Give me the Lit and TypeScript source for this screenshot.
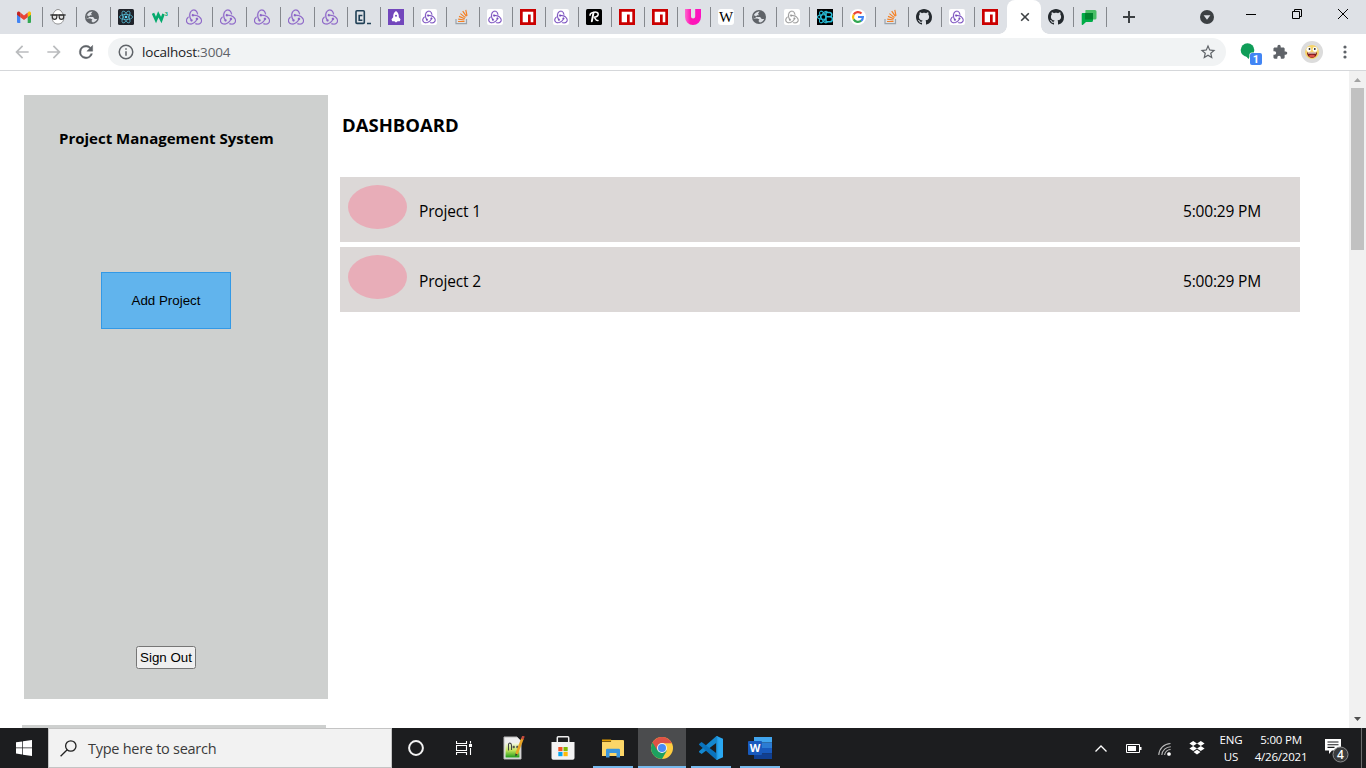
import { LitElement, html, css, svg } from "lit";
import { customElement, property } from "lit/decorators.js";
import { classMap } from "lit/directives/class-map.js";

const REDUX =
  "M16.634 16.504c.87-.075 1.543-.84 1.5-1.754-.047-.914-.796-1.648-1.709-1.648h-.061a1.71 1.71 0 00-1.648 1.769c.03.479.226.869.494 1.153-1.048 2.038-2.621 3.535-5.005 4.795-1.603.838-3.296 1.154-4.944.929-1.378-.194-2.456-.81-3.116-1.799-.988-1.499-1.078-3.116-.255-4.734.601-1.166 1.499-2.023 2.099-2.443a9.96 9.96 0 01-.42-1.543C-.868 14.408-.416 18.752.932 20.805c1.004 1.498 3.057 2.456 5.304 2.456.6 0 1.23-.044 1.843-.194 3.897-.749 6.848-3.086 8.541-6.532zm5.348-3.746c-2.32-2.728-5.738-4.226-9.634-4.226h-.51c-.253-.554-.837-.899-1.498-.899h-.045c-.943 0-1.678.81-1.647 1.753.03.898.794 1.648 1.708 1.648h.074a1.69 1.69 0 001.499-1.049h.555c2.309 0 4.495.674 6.488 1.992 1.527 1.005 2.622 2.323 3.237 3.896.538 1.288.509 2.547-.045 3.597-.855 1.647-2.294 2.517-4.196 2.517-1.199 0-2.367-.375-2.967-.644-.359.298-.959.793-1.394 1.093 1.318.598 2.652.943 3.94.943 2.922 0 5.093-1.647 5.918-3.236.898-1.798.824-4.824-1.47-7.416zM6.49 17.042c.03.899.793 1.648 1.708 1.648h.06a1.688 1.688 0 001.648-1.768c0-.9-.779-1.647-1.693-1.647h-.06c-.06 0-.149 0-.226.029-1.243-2.098-1.768-4.347-1.572-6.772.12-1.828.72-3.417 1.797-4.735.899-1.124 2.593-1.68 3.746-1.708 3.236-.061 4.585 3.971 4.689 5.574l1.498.45c-.345-4.914-3.4-7.492-6.322-7.492-2.742 0-5.273 1.993-6.293 4.915-1.398 3.896-.479 7.641 1.229 10.638-.149.195-.239.54-.209.868z";
const GITHUB =
  "M8 0C3.58 0 0 3.58 0 8c0 3.54 2.29 6.53 5.47 7.59.4.07.55-.17.55-.38 0-.19-.01-.82-.01-1.49-2.01.37-2.53-.49-2.69-.94-.09-.23-.48-.94-.82-1.13-.28-.15-.68-.52-.01-.53.63-.01 1.08.58 1.23.82.72 1.21 1.87.87 2.33.66.07-.52.28-.87.51-1.07-1.78-.2-3.64-.89-3.64-3.95 0-.87.31-1.59.82-2.15-.08-.2-.36-1.02.08-2.12 0 0 .67-.21 2.2.82.64-.18 1.32-.27 2-.27s1.36.09 2 .27c1.53-1.04 2.2-.82 2.2-.82.44 1.1.16 1.92.08 2.12.51.56.82 1.27.82 2.15 0 3.07-1.87 3.75-3.65 3.95.29.25.54.73.54 1.48 0 1.07-.01 1.93-.01 2.2 0 .21.15.46.55.38A8.01 8.01 0 0 0 16 8c0-4.42-3.58-8-8-8z";

const orbits = (color: string, w: number) => svg`
  <g fill="none" stroke=${color} stroke-width=${w}>
    <ellipse cx="8" cy="8" rx="6.6" ry="2.6"/>
    <ellipse cx="8" cy="8" rx="6.6" ry="2.6" transform="rotate(60 8 8)"/>
    <ellipse cx="8" cy="8" rx="6.6" ry="2.6" transform="rotate(120 8 8)"/>
  </g>`;

const redux = (color: string) => svg`<path transform="scale(.6667)" fill=${color} stroke=${color} stroke-width=".3" d=${REDUX}/>`;
const reduxTile = (color: string) => svg`
  <rect width="16" height="16" rx="2" fill="#fff"/>
  <path transform="translate(1.4 1.4) scale(.55)" fill=${color} stroke=${color} stroke-width=".4" d=${REDUX}/>`;

const FAVICONS: Record<string, unknown> = {
  gmail: svg`
    <path fill="#4285f4" d="M1 4v9a1 1 0 0 0 1 1h2.300V6z"/>
    <path fill="#34a853" d="M11.700 14H14a1 1 0 0 0 1-1V4l-3.300 2z"/>
    <path fill="#fbbc04" d="M11.700 4v4.200L15 5.700V4.300c0-1.500-1.600-2.200-2.700-1.400z"/>
    <path fill="#ea4335" d="M4.300 8.200V3.600L8 6.400l3.700-2.800v4.600L8 11z"/>
    <path fill="#c5221f" d="M1 4.300v1.400l3.300 2.500V3.500l-.6-.6C2.600 2.100 1 2.800 1 4.300z"/>`,
  egg: svg`
    <path d="M8 .5c3 0 5.800 4.700 5.800 8.500 0 3.500-2.500 6-5.800 6s-5.800-2.500-5.800-6C2.200 5.200 5 .5 8 .5z" fill="#fff" stroke="#777" stroke-width=".8"/>
    <g fill="#e4e4e4" stroke="#333" stroke-width="1.200">
      <path d="M2.300 6h4.500v2c0 3.200-4.500 3.200-4.500 0zM9.200 6h4.500v2c0 3.200-4.500 3.200-4.500 0z"/>
      <path d="M.3 6h15.400" fill="none" stroke-width="1.300"/>
    </g>`,
  globe: svg`
    <circle cx="8" cy="8" r="7" fill="#5f6368"/>
    <path fill="#dee1e6" d="M8.600 2.600 7 4.700l1 1.600H6L4.800 8l4.300.1 1.600 1.900h2.500c-.7 1.900-2.400 3.200-4.400 3.500L7.400 12l1-1.600-2-.9H2.700C1.800 6 4.700 2.600 8.600 2.600z"/>
    <path fill="#5f6368" d="M2.500 6 5 7.300 4.500 9H2.400z"/>`,
  react: svg`<rect width="16" height="16" rx="1.500" fill="#20232a"/>${orbits("#55bcd6", 0.75)}<circle cx="8" cy="8" r="1.300" fill="#61dafb"/>`,
  w3: svg`
    <path fill="none" stroke="#04aa6d" stroke-width="2.600" d="M1 4.200 4 11l2.300-5.600L9.300 11l2.200-6"/>
    <text class="bold" x="12.800" y="6.500" font-size="5.500" fill="#04aa6d">3</text>`,
  redux: redux("#8b63c8"),
  reduxTile: reduxTile("#764abc"),
  reduxGrey: reduxTile("#999"),
  code: svg`
    <rect x="1" y="1.700" width="8.300" height="12.700" rx="1" fill="none" stroke="#204056" stroke-width="1.600"/>
    <path d="M7.400 6.500H4.200v4.700h3.200M12 14.500h4" fill="none" stroke="#204056" stroke-width="1.600"/>`,
  rocket: svg`
    <rect width="16" height="16" fill="#7347bc"/>
    <path fill="#fff" d="M8 2c2.300 1.500 3 4 2.800 6.300l1.700 1.900-.7 2H9.600L8 13.600l-1.600-1.400H4.200l-.7-2 1.700-1.900C5 6 5.700 3.500 8 2z"/>
    <circle cx="8" cy="6.700" r="1" fill="#7347bc"/>`,
  stack: svg`
    <path d="M2 10v4.600h10.500V10" fill="none" stroke="#9ba4ac" stroke-width="1.200"/>
    <path d="M4 12.500h6.500M4.200 10.200l6.200.8M5 7.400l5.800 2.300M6.400 4.600l5 4M8.700 2.200l3.700 5.200M11.800.8l1.200 6" fill="none" stroke="#f48024" stroke-width="1.200"/>`,
  npm: svg`
    <rect width="16" height="16" fill="#cb0000"/>
    <path fill="#fff" d="M2.700 2.700h10.600v10.600h-2.600V5.400H8v7.900H2.700z"/>`,
  script: svg`
    <rect width="16" height="16" rx="1.500" fill="#000"/>
    <g fill="none" stroke="#fff" stroke-linecap="round">
      <path stroke-width="1.900" d="M7.500 3.800 5.800 12.200"/>
      <path stroke-width="1.500" d="M4 6.200c0-3.400 8.600-4.400 8.200-.9-.2 1.700-2 2.700-4.500 2.900 2 .3 1.600 4.200 4.300 3.300"/>
    </g>`,
  magenta: svg`
    <defs><linearGradient id="mg" x1="0" x2="1"><stop offset="0" stop-color="#ff6ad0"/><stop offset=".35" stop-color="#ff17b4"/><stop offset="1" stop-color="#fb12c2"/></linearGradient></defs>
    <path fill="url(#mg)" d="M0 0h6v7.500a2 2 0 0 0 4.200 0V0H16v8a8 8 0 0 1-16 0z"/>`,
  wiki: svg`
    <rect width="16" height="16" rx="3" fill="#fff"/>
    <text class="serif" x="8" y="13" text-anchor="middle" font-size="15" fill="#000">W</text>`,
  bootstrap: svg`
    <rect width="16" height="16" fill="#000"/>
    <g fill="none" stroke="#29bdd8" stroke-width="1.100">
      <ellipse cx="6.500" cy="8" rx="6" ry="2.300"/>
      <ellipse cx="6.500" cy="8" rx="6.500" ry="2.500" transform="rotate(60 6.500 8)"/>
      <ellipse cx="6.500" cy="8" rx="6.500" ry="2.500" transform="rotate(120 6.500 8)"/>
    </g>
    <path d="M9 3.500h3.600c3 0 2.800 4.300 0 4.300H9zm0 4.300h4c3.300 0 3.200 5 0 5H9z" fill="#000" stroke="#29bdd8" stroke-width="1.500"/>`,
  google: svg`
    <circle cx="8" cy="8" r="8" fill="#fff"/>
    <g fill="none" stroke-width="2.200">
      <path stroke="#ea4335" d="M3.700 5.600A4.900 4.900 0 0 1 11.500 4.500"/>
      <path stroke="#fbbc05" d="M3.700 5.600A4.900 4.900 0 0 0 3.700 10.500"/>
      <path stroke="#34a853" d="M3.700 10.400A4.900 4.900 0 0 0 11.200 11.700"/>
      <path stroke="#4285f4" d="M11.100 11.800A4.900 4.900 0 0 0 12.900 8H8"/>
    </g>`,
  github: svg`<path fill="#24292e" d=${GITHUB}/>`,
  chat: svg`
    <path fill="#49be66" d="M4.500 1H14a1.500 1.500 0 0 1 1.500 1.500V9A1.500 1.500 0 0 1 14 10.500H4z"/>
    <path fill="#00ac47" d="M1.500 4H12v7.500a1.500 1.500 0 0 1-1.500 1.500H5l-3 2.700c-.8.500-1.300.3-1.300-.5V5c0-.6.300-1 .8-1z"/>
    <path fill="#00832d" d="M4 4h8v6.500H4z"/>`,
};

const TABS = [
  "gmail", "egg", "globe", "react", "w3", "redux", "redux", "redux", "redux",
  "redux", "code", "rocket", "reduxTile", "stack", "reduxTile", "npm", "reduxTile",
  "script", "npm", "npm", "magenta", "wiki", "globe", "reduxGrey", "bootstrap",
  "google", "stack", "github", "reduxTile", "npm",
];

@customElement("browser-tab")
class BrowserTab extends LitElement {
  @property() icon = "";
  @property({ type: Boolean }) wide = false;
  @property({ type: Boolean }) last = false;

  static styles = css`
    :host { display: block; flex: none; height: 34px; }
    .tab { display: flex; align-items: center; height: 34px; width: 33px; padding-left: 7px; box-sizing: border-box; justify-content: space-between; }
    .wide { width: 34px; }
    .last { width: 32px; }
    svg { display: block; width: 16px; height: 16px; }
    .line { width: 1px; height: 20px; background: #85888d; }
    .bold { font-family: "Liberation Sans", sans-serif; font-weight: 700; }
    .serif { font-family: "Liberation Serif", serif; }
  `;

  render() {
    return html`<div class=${classMap({ tab: true, wide: this.wide, last: this.last })}>
      <svg viewBox="0 0 16 16">${FAVICONS[this.icon]}</svg>
      ${this.last ? "" : html`<span class="line"></span>`}
    </div>`;
  }
}

@customElement("browser-chrome")
class BrowserChrome extends LitElement {
  static styles = css`
    :host { display: block; font-family: "Open Sans", sans-serif; }
    svg { display: block; flex: none; }
    .strip { display: flex; height: 34px; background: #dee1e6; padding-left: 9px; }
    .active { width: 34px; height: 34px; background: #fff; border-radius: 8px 8px 0 0; display: flex; align-items: center; justify-content: center; position: relative; box-sizing: border-box; padding-left: 2px; }
    .active::before, .active::after { content: ""; position: absolute; bottom: 0; width: 8px; height: 8px; }
    .active::before { left: -8px; background: radial-gradient(circle at 0 0, transparent 7.5px, #fff 8px); }
    .active::after { right: -8px; background: radial-gradient(circle at 100% 0, transparent 7.5px, #fff 8px); }
    .plus { padding: 10px 0 0 15px; }
    .window { margin-left: auto; display: flex; }
    .down { padding: 10px 32px 0 0; }
    .min { padding: 14px 36px 0 0; }
    .restore { padding: 9px 36px 0 0; }
    .close { padding: 9px 18px 0 0; }
    .bar { display: flex; align-items: center; height: 36px; background: #fff; border-bottom: 1px solid #d5d7da; padding-left: 12px; }
    .nav { display: flex; gap: 12px; }
    .url { display: flex; align-items: center; width: 1118px; height: 28px; margin-left: 12px; border-radius: 14px; background: #f1f3f4; box-sizing: border-box; padding: 0 9px 0 9px; }
    .address { margin-left: 7px; flex: 1; font-size: 13.5px; letter-spacing: -0.2px; color: #202124; line-height: 20px; }
    .port { color: #5f6368; }
    .ext { display: flex; align-items: center; }
    .meet { margin: 5px 0 0 14px; }
    .puzzle { margin-left: 9px; }
    .avatar { margin-left: 12px; }
    .more { margin-left: 11.5px; }
    .num { font-family: "Roboto", sans-serif; font-weight: 700; }
  `;

  render() {
    return html`
      <div class="strip">
        ${TABS.map((t, i) => html`<browser-tab .icon=${t} .wide=${i < 9} .last=${i === TABS.length - 1}></browser-tab>`)}
        <div class="active">
          <svg width="10" height="10" viewBox="0 0 10 10"><path d="M1.200 1.200l7.600 7.600M8.800 1.200 1.200 8.800" stroke="#3c4043" stroke-width="1.600"/></svg>
        </div>
        <browser-tab .icon=${"github"}></browser-tab>
        <browser-tab .icon=${"chat"}></browser-tab>
        <div class="plus"><svg width="14" height="14" viewBox="0 0 14 14"><path d="M7 1v12M1 7h12" stroke="#3c4043" stroke-width="2"/></svg></div>
        <div class="window">
          <svg class="down" width="14" height="14" viewBox="0 0 14 14"><circle cx="7" cy="7" r="7" fill="#3c4043"/><path d="M3.600 5.200h6.800L7 9.800z" fill="#dee1e6"/></svg>
          <svg class="min" width="10" height="1"><rect width="10" height="1"/></svg>
          <svg class="restore" width="10" height="10" viewBox="0 0 10 10" fill="none" stroke="#000"><path d="M.5 2.500h7v7h-7zM2.500 2.500v-2h7v7h-2"/></svg>
          <svg class="close" width="10" height="10" viewBox="0 0 10 10"><path d="M0 0l10 10M10 0 0 10" stroke="#000"/></svg>
        </div>
      </div>
      <div class="bar">
        <div class="nav">
          <svg width="20" height="20" viewBox="0 0 24 24" fill="#babcbe"><path d="M20 11H7.830l5.590-5.590L12 4l-8 8 8 8 1.410-1.410L7.830 13H20z"/></svg>
          <svg width="20" height="20" viewBox="0 0 24 24" fill="#babcbe"><path d="M4 11h12.170l-5.590-5.590L12 4l8 8-8 8-1.410-1.410L16.170 13H4z"/></svg>
          <svg width="20" height="20" viewBox="0 0 24 24" fill="#5f6368" stroke="#5f6368" stroke-width=".5"><path d="M17.650 6.350A7.958 7.958 0 0 0 12 4a8 8 0 1 0 7.730 10h-2.080A6 6 0 1 1 12 6c1.660 0 3.140.69 4.220 1.780L13 11h7V4z"/></svg>
        </div>
        <div class="url">
          <svg width="18" height="18" viewBox="0 0 24 24" fill="#5f6368"><path d="M11 17h2v-6h-2v6zm1-15a10 10 0 1 0 0 20 10 10 0 0 0 0-20zm0 18a8 8 0 1 1 0-16 8 8 0 0 1 0 16zM11 9h2V7h-2z"/></svg>
          <span class="address">localhost<span class="port">:3004</span></span>
          <svg width="18" height="18" viewBox="0 0 24 24" fill="#5f6368"><path d="M22 9.240l-7.190-.62L12 2 9.190 8.630 2 9.240l5.460 4.730L5.820 21 12 17.270 18.180 21l-1.630-7.030zM12 15.400l-3.760 2.270 1-4.280-3.320-2.880 4.380-.38L12 6.100l1.710 4.040 4.380.38-3.320 2.880 1 4.280z"/></svg>
        </div>
        <div class="ext">
          <svg class="meet" width="22" height="23" viewBox="0 0 22 23">
            <circle cx="7.500" cy="7" r="6.800" fill="#0f9d58"/><path d="M5 12h6l-2.500 4z" fill="#0f9d58"/>
            <rect x="9.400" y="9.400" width="13.200" height="13.200" rx="2.500" fill="#fff"/>
            <rect x="10" y="10" width="12" height="12" rx="2" fill="#4285f4"/>
            <text class="num" x="16" y="20" font-size="11" text-anchor="middle" fill="#fff">1</text>
          </svg>
          <svg class="puzzle" width="18" height="18" viewBox="0 0 24 24" fill="#5f6368"><path d="M20.500 11H19V7c0-1.100-.9-2-2-2h-4V3.500a2.500 2.500 0 0 0-5 0V5H4c-1.100 0-2 .9-2 2v3.800h1.500a2.700 2.700 0 0 1 0 5.400H2V20c0 1.100.9 2 2 2h3.800v-1.500a2.700 2.700 0 0 1 5.400 0V22H17c1.100 0 2-.9 2-2v-4h1.500a2.500 2.500 0 0 0 0-5z" transform="translate(1.500 1.500) scale(.88)"/></svg>
          <svg class="avatar" width="22" height="22" viewBox="0 0 22 22">
            <circle cx="11" cy="11" r="11" fill="#dcdcdc"/><circle cx="11" cy="11" r="7" fill="#f7d56b"/>
            <circle cx="7.800" cy="8.500" r="2.400" fill="#fff"/><circle cx="14" cy="8.500" r="2.400" fill="#fff"/>
            <circle cx="8.500" cy="8" r=".9" fill="#222"/><circle cx="13.800" cy="8" r=".9" fill="#222"/>
            <path d="M6 11.500h10c0 7-10 7-10 0z" fill="#7d1c1c"/><path d="M7 11.500h8v1H7z" fill="#fff"/><ellipse cx="11" cy="15" rx="3" ry="1.300" fill="#e0504a"/>
          </svg>
          <svg class="more" width="20" height="20" viewBox="0 0 20 20" fill="#5f6368"><circle cx="10" cy="5" r="1.600"/><circle cx="10" cy="10" r="1.600"/><circle cx="10" cy="15" r="1.600"/></svg>
        </div>
      </div>`;
  }
}

@customElement("dashboard-page")
class DashboardPage extends LitElement {
  static styles = css`
    :host { display: flex; height: 657px; overflow: hidden; background: #fff; font-family: "Open Sans", sans-serif; color: #000; }
    .side { width: 328px; flex: none; }
    .panel { margin: 24px 0 0 24px; width: 304px; height: 604px; background: #ced0cf; display: flex; flex-direction: column; box-sizing: border-box; padding: 31px 0 30px 35px; }
    .next { margin: 26px 0 0 22px; width: 304px; height: 40px; background: #ced0cf; }
    .brand { margin: 0; font-size: 15px; line-height: 24px; font-weight: 700; letter-spacing: 0; white-space: nowrap; }
    button { font-family: "Liberation Sans", Arial, sans-serif; font-size: 13.333px; color: #000; padding: 0; box-sizing: border-box; }
    .add { margin: 122px 0 0 42px; width: 130px; height: 57px; background: #61b4ed; border: 1px solid #3399e6; }
    .out { margin: auto 0 0 77px; width: 60px; height: 23px; background: #efefef; border: 1px solid #767676; border-radius: 2.500px; }
    .main { flex: 1; padding: 40px 0 0 12px; }
    .title { margin: 0 0 39px 2px; font-size: 18.5px; line-height: 27px; font-weight: 700; letter-spacing: 0; }
    .list { display: flex; flex-direction: column; gap: 5px; }
    .row { width: 960px; height: 65px; box-sizing: border-box; padding: 8px 39px 0 8px; display: flex; background: #dcd8d7; font-size: 15.500px; line-height: 24px; letter-spacing: -0.17px; }
    .dot { width: 59px; height: 44px; border-radius: 50%; background: #e8adb8; }
    .name { margin: 14px 0 0 12px; flex: 1; }
    .time { margin-top: 14px; }
    .scroll { width: 17px; background: #f1f1f1; display: flex; flex-direction: column; align-items: center; }
    .thumb { width: 13px; height: 162px; background: #c1c1c1; }
    .arrow { display: block; }
    .down { margin-top: auto; }
  `;

  render() {
    return html`
      <div class="side">
        <section class="panel">
          <h4 class="brand">Project Management System</h4>
          <button class="add">Add Project</button>
          <button class="out">Sign Out</button>
        </section>
        <div class="next"></div>
      </div>
      <main class="main">
        <h3 class="title">DASHBOARD</h3>
        <div class="list">
          ${["Project 1", "Project 2"].map((name) => html`
            <div class="row"><span class="dot"></span><span class="name">${name}</span><span class="time">5:00:29 PM</span></div>`)}
        </div>
      </main>
      <div class="scroll">
        <svg class="arrow" width="17" height="17"><path d="M5 11l3.500-4 3.500 4z" fill="#a3a3a3"/></svg>
        <div class="thumb"></div>
        <svg class="arrow down" width="17" height="17"><path d="M5 6l3.500 4L12 6z" fill="#505050"/></svg>
      </div>`;
  }
}

@customElement("task-bar")
class TaskBar extends LitElement {
  static styles = css`
    :host { display: flex; height: 40px; background: #1c1d1f; font-family: "Open Sans", sans-serif; color: #fff; }
    svg { display: block; flex: none; }
    .cell { width: 48px; height: 40px; display: flex; align-items: center; justify-content: center; flex: none; }
    .search { width: 344px; height: 40px; box-sizing: border-box; background: #f2f2f2; border: 1px solid #c4c4c4; display: flex; align-items: center; padding-left: 11px; }
    .hint { margin: 2px 0 0 11px; font-size: 14.500px; line-height: 20px; letter-spacing: -0.27px; color: #3b3b3b; }
    .apps { display: grid; grid-template-columns: 49px 50px 49px 49px 49px 48px; margin-left: 2px; }
    .open, .current { box-sizing: border-box; border-bottom: 2px solid #76b9ed; padding-top: 2px; }
    .open { width: 40px; margin-left: 4px; }
    .current { background: #4b4c4e; }
    .tray { margin-left: auto; display: flex; align-items: center; height: 40px; }
    .caret { margin-right: 19px; }
    .battery { margin-right: 16px; }
    .wifi { margin: 2px 17px 0 0; }
    .box { margin-right: 14px; }
    .lang, .clock { font-size: 11.500px; line-height: 17px; letter-spacing: -0.2px; text-align: center; white-space: nowrap; margin-top: -1px; }
    .lang { width: 24px; display: flex; flex-direction: column; align-items: center; }
    .clock { width: 56px; margin-left: 10px; display: flex; flex-direction: column; align-items: center; }
    .note { margin: 3px 0 0 16px; }
    .edge { width: 1px; height: 40px; background: #6b6c6d; margin: 0 4px 0 12px; }
    .num { font-family: "Open Sans", sans-serif; font-weight: 600; }
    .word { font-family: "Open Sans", sans-serif; font-weight: 700; }
  `;

  render() {
    return html`
      <div class="cell">
        <svg width="16" height="16" viewBox="0 0 16 16" fill="#fff"><path d="M0 2.300l6.300-.9v6.100H0zM7 1.300 16 0v7.500H7zM0 8.300h6.300v6.100L0 13.600zM7 8.300h9V16l-9-1.300z"/></svg>
      </div>
      <div class="search">
        <svg width="17" height="17" viewBox="0 0 17 17" fill="none" stroke="#222" stroke-width="1.300"><circle cx="10.800" cy="6" r="5.200"/><path d="M7.200 9.700.6 16.300"/></svg>
        <span class="hint">Type here to search</span>
      </div>
      <div class="cell"><svg width="16" height="16" viewBox="0 0 16 16"><circle cx="8" cy="8" r="6.900" fill="none" stroke="#f2f2f2" stroke-width="2"/></svg></div>
      <div class="cell">
        <svg width="16" height="16" viewBox="0 0 16 16" fill="none" stroke="#fff" stroke-width="1.100"><path d="M.5 1v2.500h10V1M.5 15v-2.500h10V15M.5 5.500h10v5H.5zM14.500 1v2.500M14.500 8v7"/><path d="M13 4h3v3h-3z" fill="#fff" stroke="none"/></svg>
      </div>
      <div class="apps">
        <div class="cell">
          <svg width="22" height="24" viewBox="0 0 22 24">
            <defs><linearGradient id="np" x1="0" y1="0" x2="0" y2="1"><stop offset="0" stop-color="#f4f7ec"/><stop offset=".5" stop-color="#c5e75c"/><stop offset="1" stop-color="#1e9a1a"/></linearGradient></defs>
            <path d="M1 1h13l4 4v18H1z" fill="#eee" stroke="#b8b8b8"/>
            <path d="M2.500 7h14v14.500h-14z" fill="url(#np)"/>
            <path d="M5.500 14.500V8.500C5.500 6.500 8.500 6.500 8.500 9.500V14M9.500 11h2.500M13 11h2.500M10.800 9.700v2.600M14.300 9.700v2.600" stroke="#444" stroke-width="1.100" fill="none"/>
            <path d="M19.500 2.500 13.500 18" stroke="#e9a426" stroke-width="2.600"/><path d="M20.500 0 19.200 3.300" stroke="#c34c3e" stroke-width="2.600"/><path d="M12.300 17.500l2.300.9-2.100 2z" fill="#333"/>
          </svg>
        </div>
        <div class="cell">
          <svg width="24" height="24" viewBox="0 0 24 24">
            <path d="M6.300 7V1.800q0-1 .9-1h9.600q.9 0 .9 1V7" fill="none" stroke="#eee" stroke-width="1.500"/>
            <path d="M.5 6h23v16a1.800 1.800 0 0 1-1.800 1.800H2.300A1.800 1.800 0 0 1 .5 22z" fill="#f3f3f3"/>
            <path fill="#f35325" d="M7.300 11h4.200v4.200H7.300z"/><path fill="#81bc06" d="M12.500 11h4.200v4.200h-4.200z"/><path fill="#05a6f0" d="M7.300 16h4.200v4.200H7.300z"/><path fill="#ffba08" d="M12.500 16h4.200v4.200h-4.200z"/>
          </svg>
        </div>
        <div class="cell open">
          <svg width="22" height="20" viewBox="0 0 22 20">
            <path d="M0 1.500h9l1 2H0z" fill="#e09b00"/><path d="M9 2h12.500v3H9z" fill="#f4c84e"/>
            <path d="M0 4h9l1.500-1.500H22V18H0z" fill="#fcd668"/>
            <path d="M4 19.500V12q0-1.200 1.200-1.200h11.600Q18 10.800 18 12v7.500h-3.500V15h-7v4.500z" fill="#3a96dd"/>
          </svg>
        </div>
        <div class="cell current">
          <svg width="22" height="22" viewBox="0 0 22 22">
            <circle cx="11" cy="11" r="11" fill="#ffcd40"/>
            <path d="M11 11 1.480 5.500A11 11 0 0 0 11 22l4.800-8.200z" fill="#1da160"/>
            <path d="M1.480 5.500A11 11 0 0 1 20.520 5.500L20.900 6.300H11L6.500 13.600z" fill="#de5246"/>
            <circle cx="11" cy="11" r="5" fill="#f4f4f4"/><circle cx="11" cy="11" r="4" fill="#4a8bf5"/>
          </svg>
        </div>
        <div class="cell open">
          <svg width="24" height="24" viewBox="0 0 24 24">
            <path d="M17.500 0 24 2.800v18.400L17.500 24z" fill="#2aa8f2"/>
            <path d="M17.500 0v6.800L2.600 18 .3 16.200q-.7-.6 0-1.300z" fill="#1488d0"/>
            <path d="M17.500 24v-6.800L2.600 6 .3 7.800q-.7.6 0 1.300z" fill="#0a73bd"/>
            <path d="M17.500 0v24l1.800-.8V.8z" fill="#1f9be6"/>
          </svg>
        </div>
        <div class="cell open">
          <svg width="24" height="22" viewBox="0 0 24 22">
            <path d="M6 0h18v5.500H6z" fill="#41a5ee"/><path d="M6 5.500h18V11H6z" fill="#2b7cd3"/><path d="M6 11h18v5.500H6z" fill="#185abd"/><path d="M6 16.500h18V22H6z" fill="#103f91"/>
            <rect y="4" width="14" height="14" rx="1" fill="#185abd"/>
            <text class="word" x="7" y="15" text-anchor="middle" font-size="11" fill="#fff">W</text>
          </svg>
        </div>
      </div>
      <div class="tray">
        <svg class="caret" width="12" height="7" viewBox="0 0 12 7"><path d="M.5 6.500 6 1l5.500 5.500" fill="none" stroke="#fff" stroke-width="1.300"/></svg>
        <svg class="battery" width="16" height="9" viewBox="0 0 16 9"><path d="M.5.500h13v8H.5z" fill="none" stroke="#fff"/><path d="M2 2h8v5H2zM14 3h1.500v3H14z" fill="#fff"/></svg>
        <svg class="wifi" width="14" height="14" viewBox="0 0 14 14" fill="none" stroke="#bbb" stroke-width="1.100"><path d="M.8 13A12 12 0 0 1 12.500 1.500M3.800 13a9 9 0 0 1 9-8.300M6.600 13a6 6 0 0 1 6-5.500"/><circle cx="11" cy="12" r="1.300" fill="#fff" stroke="#fff"/></svg>
        <svg class="box" width="16" height="14" viewBox="0 0 16 14" fill="#fff"><path d="M4.200 0 8 2.500 4.200 5 .4 2.500zM11.800 0l3.800 2.500L11.800 5 8 2.500zM4.200 5 8 7.500 4.200 10 .4 7.500zM11.800 5l3.800 2.500-3.800 2.500L8 7.500zM8 8.800l3.500 2.300L8 13.600l-3.500-2.500z"/></svg>
        <div class="lang"><span>ENG</span><span>US</span></div>
        <div class="clock"><span>5:00 PM</span><span>4/26/2021</span></div>
        <svg class="note" width="24" height="26" viewBox="0 0 24 26">
          <path d="M0 2h16v11.500H7L4 17v-3.500H0z" fill="#fff"/><path d="M2.500 5h11M2.500 7.700h11M2.500 10.400h7" stroke="#1c1d1f" stroke-width="1.100"/>
          <circle cx="15.500" cy="17.500" r="7.500" fill="#3a3b3c" stroke="#8b8c8d"/>
          <text class="num" x="15.500" y="21.800" font-size="12" text-anchor="middle" fill="#fff">4</text>
        </svg>
        <span class="edge"></span>
      </div>`;
  }
}

@customElement("app-root")
class AppRoot extends LitElement {
  static styles = css`
    :host { display: block; width: 1366px; height: 768px; overflow: hidden; }
  `;

  render() {
    return html`<browser-chrome></browser-chrome><dashboard-page></dashboard-page><task-bar></task-bar>`;
  }
}
